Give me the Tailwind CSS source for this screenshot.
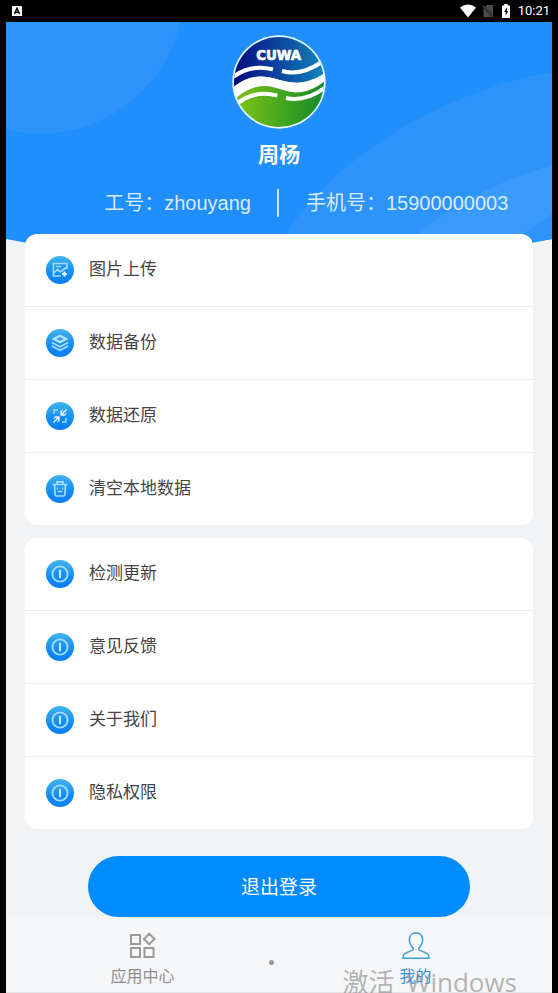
<!DOCTYPE html>
<html lang="zh-CN">
<head>
<meta charset="utf-8">
<meta name="viewport" content="width=device-width, initial-scale=1">
<title>我的</title>
<script src="https://cdn.jsdelivr.net/npm/@tailwindcss/browser@4"></script>
</head>
<body class="bg-black font-['Liberation_Sans','Noto_Sans_CJK_SC',sans-serif]">
<svg class="absolute size-0" aria-hidden="true">
  <defs>
    <linearGradient id="disc" x1="0" y1="0" x2="0" y2="1"><stop offset="0" stop-color="#41b4ec"/><stop offset=".6" stop-color="#118cf5"/><stop offset="1" stop-color="#087df5"/></linearGradient>
    <symbol id="info" viewBox="0 0 28 28"><circle cx="14" cy="14" r="14" fill="url(#disc)"/><circle cx="14" cy="14" r="7.6" fill="none" stroke="#a5dcff" stroke-width="1.9"/><path d="M14 9.800v8.400" stroke="#c8eaff" stroke-width="2"/></symbol>
  </defs>
</svg>
<div class="flex min-h-screen flex-col overflow-hidden">
  <div class="flex h-[22px] items-center justify-between pr-2 pl-3 text-white">
    <svg class="size-[10px]" viewBox="0 0 10 10"><rect width="10" height="11" rx="1" fill="#fff"/><path d="M2.4 8 5 2.2 7.6 8M3.4 6.2h3.2" fill="none" stroke="#000" stroke-width="1.4"/></svg>
    <div class="flex items-center">
      <svg class="h-[14px] w-4" viewBox="0 0 16 14"><path d="M0 3.4Q8-2.6 16 3.4L8 13.4Z" fill="#fff"/></svg>
      <svg class="ml-1.5 h-[14px] w-3" viewBox="0 0 12 14"><path d="M4.5 1H11v10L3 3ZM1.5 4v9h8.500Z" fill="#4a4a4a"/><path d="m.5 1.500 11 11.500" stroke="#4a4a4a" stroke-width="1.200"/></svg>
      <svg class="ml-2 h-[14px] w-2" viewBox="0 0 8 14"><path d="M2.200 0h3.600v1.500H8V14H0V1.500h2.200Z" fill="#fff"/><path d="M4.800 3.500 2 8h1.700v3.500L6.300 7H4.800Z" fill="#000"/></svg>
      <span class="ml-2 font-[Roboto,sans-serif] text-[13px] leading-5">10:21</span>
    </div>
  </div>

  <div class="mx-1.5 flex flex-1 flex-col bg-[#f1f3f5]">
    <header class="relative pt-[13px] pb-[17px] text-white">
      <svg class="absolute inset-x-0 top-0 h-[244px] w-full" viewBox="0 0 546 244" preserveAspectRatio="none" aria-hidden="true">
        <defs><clipPath id="hero"><path d="M0 0H546V217Q273 270 0 217Z"/></clipPath></defs>
        <g clip-path="url(#hero)">
          <path d="M0 0H546V244H0Z" fill="#208efb"/>
          <circle cx="34" cy="-32" r="144" fill="#2d94fc"/>
          <path d="M278 215C300 178 335 148 362 128C415 90 480 62 546 50V244H270Z" fill="#2d94fc"/>
          <path d="M408 215C450 180 500 156 546 143V192L512 216H400Z" fill="#3a9bfa"/>
        </g>
      </svg>
      <div class="relative flex flex-col items-center">
        <svg class="size-[94px]" viewBox="37 19 282 282" role="img" aria-label="CUWA">
          <defs>
            <linearGradient id="sky" x1="0" y1="0" x2="1" y2="0"><stop offset="0" stop-color="#03077c"/><stop offset=".4" stop-color="#0b3a99"/><stop offset="1" stop-color="#0f86bb"/></linearGradient>
            <linearGradient id="land" x1="0" y1="0" x2="1" y2="0"><stop offset="0" stop-color="#86c515"/><stop offset=".55" stop-color="#41a51f"/><stop offset="1" stop-color="#12862a"/></linearGradient>
            <clipPath id="badge"><circle cx="178" cy="160" r="135"/></clipPath>
          </defs>
          <circle cx="178" cy="160" r="140" fill="#e4fbff"/>
          <g clip-path="url(#badge)">
            <path d="M38 20H320V132C285 155 245 170 195 158C145 143 100 127 38 178Z" fill="url(#sky)"/>
            <path d="M38 178C100 127 145 143 195 158C245 170 285 155 320 130V156C275 190 235 200 190 184C140 166 105 161 38 216Z" fill="#fff"/>
            <path d="M38 216C105 161 140 166 190 184C235 200 275 190 320 154V310H38Z" fill="url(#land)"/>
            <g fill="none" stroke="#fff" stroke-width="12">
              <path d="M40 145Q95 105 160 122M187 127Q245 143 306 100M52 225Q105 183 173 201"/>
              <path d="M199 208Q258 220 314 178"/>
            </g>
          </g>
          <text x="177" y="95" text-anchor="middle" class="font-['DejaVu_Sans',sans-serif] text-[40px] font-bold" fill="#fff" stroke="#fff" stroke-width="2">CUWA</text>
        </svg>
        <h1 class="mt-3 text-[21px] leading-7 font-bold">周杨</h1>
      </div>
      <div class="relative mt-5 grid grid-cols-2 text-[20px] leading-7 whitespace-nowrap text-[#d9ebff]">
        <p class="border-r-2 border-[#c5e2ff] pr-[26px] text-right">工号：zhouyang</p>
        <p class="pl-[27px]">手机号：15900000003</p>
      </div>
    </header>

    <main class="relative flex flex-col px-[19px] text-[17px] text-[#444]">
      <nav class="divide-y divide-[#ebecee] rounded-xl bg-white">
        <a href="#" class="flex h-[73px] items-center gap-[15px] px-[21px]">
          <svg class="size-7" viewBox="0 0 28 28"><circle cx="14" cy="14" r="14" fill="url(#disc)"/><g fill="none" stroke="#9ed9ff" stroke-width="1.700"><path d="M21 13V7.500H7.500V20H15M7.500 17.500l4-4 3 2.500L20 11.500M10 10.500h5"/></g><path d="M18.500 15.500v5M16 18h5" stroke="#dff3ff" stroke-width="2"/></svg>
          <span>图片上传</span></a>
        <a href="#" class="flex h-[73px] items-center gap-[15px] px-[21px]">
          <svg class="size-7" viewBox="0 0 28 28"><circle cx="14" cy="14" r="14" fill="url(#disc)"/><path d="m14 5.500 8.500 4.500-8.500 4.500L5.500 10Z" fill="#b9e4ff"/><path d="m14 8 4 2-4 2-4-2Z" fill="#329ff1"/><path d="m5.800 13.500 8.200 4.300 8.200-4.300M5.800 17l8.200 4.300 8.200-4.300" fill="none" stroke="#a9ddff" stroke-width="1.600"/></svg>
          <span>数据备份</span></a>
        <a href="#" class="flex h-[73px] items-center gap-[15px] px-[21px]">
          <svg class="size-7" viewBox="0 0 28 28"><circle cx="14" cy="14" r="14" fill="url(#disc)"/><g fill="none" stroke="#9ed9ff" stroke-width="1.500"><path d="M8 12V8h4M20 16v4h-4M16 8h1M20 11v1M8 16v1M11 20h1"/></g><path d="m20.500 7.500-5 5M15.200 8.500v4.300h4.300M7.500 20.500l5-5M8.500 15.200h4.300v4.300" fill="none" stroke="#dff3ff" stroke-width="1.700"/></svg>
          <span>数据还原</span></a>
        <a href="#" class="flex h-[72px] items-center gap-[15px] px-[21px]">
          <svg class="size-7" viewBox="0 0 28 28"><circle cx="14" cy="14" r="14" fill="url(#disc)"/><path d="M6.500 9.500h15M11 9V6.800h6V9M8.500 10l.6 9.500q.1 1.500 1.500 1.500h6.800q1.400 0 1.500-1.500l.6-9.500M11.500 16.500h5" fill="none" stroke="#a9ddff" stroke-width="1.700"/><path d="M11.500 12.500v2M16.500 12.500v2" stroke="#a9ddff" stroke-width="1.300"/></svg>
          <span>清空本地数据</span></a>
      </nav>
      <nav class="mt-[13px] divide-y divide-[#ebecee] rounded-xl bg-white">
        <a href="#" class="flex h-[73px] items-center gap-[15px] px-[21px]"><svg class="size-7"><use href="#info"/></svg><span>检测更新</span></a>
        <a href="#" class="flex h-[73px] items-center gap-[15px] px-[21px]"><svg class="size-7"><use href="#info"/></svg><span>意见反馈</span></a>
        <a href="#" class="flex h-[73px] items-center gap-[15px] px-[21px]"><svg class="size-7"><use href="#info"/></svg><span>关于我们</span></a>
        <a href="#" class="flex h-[72px] items-center gap-[15px] px-[21px]"><svg class="size-7"><use href="#info"/></svg><span>隐私权限</span></a>
      </nav>
      <button type="button" class="mx-[63px] mt-[27px] h-[61px] rounded-full bg-[#008cff] pt-1 text-[19px] text-white">退出登录</button>
    </main>

    <footer class="relative mt-0.5 flex-1 border-b border-[#e2e4e6] bg-[#f5f7f9]">
      <nav class="grid grid-cols-2 text-[16px] leading-6">
        <a href="#" class="flex flex-col items-center pt-3 text-[#8f8f8f]">
          <svg class="size-[30px]" viewBox="0 0 30 30" fill="none" stroke="#9b9b9b" stroke-width="2"><path d="M3 4h9v9H3ZM3 17h9v9H3ZM16.500 17h9v9h-9ZM21.200 2.700l5.300 5.300-5.300 5.300L15.900 8Z"/></svg>
          <span class="mt-1">应用中心</span></a>
        <a href="#" aria-current="page" class="flex flex-col items-center pt-3 text-[#3a93d3]">
          <svg class="size-[30px]" viewBox="0 0 30 30" fill="none" stroke="#3c9fd0" stroke-width="1.500"><path d="M15 1.800c-4 0-6.600 2.800-6.600 6.800 0 3.200 1.300 6.200 3.300 8 1 1 .7 2.200-.6 2.800l-6 2.500C3 22.800 2 24.500 2 27.200h26c0-2.700-1-4.400-3.100-5.300l-6-2.500c-1.300-.6-1.600-1.800-.6-2.800 2-1.800 3.300-4.800 3.300-8 0-4-2.600-6.800-6.600-6.800Z"/></svg>
          <span class="mt-1">我的</span></a>
      </nav>
      <span class="absolute top-[41px] left-[263px] size-[5px] rounded-full bg-[#999]"></span>
      <div class="pointer-events-none absolute right-[35px] -bottom-2 flex gap-3 font-['Open_Sans','Noto_Sans_CJK_SC',sans-serif] text-[26px] leading-9 whitespace-nowrap text-[#777]/55"><span>激活</span><span>Windows</span></div>
    </footer>
  </div>
</div>
</body>
</html>
